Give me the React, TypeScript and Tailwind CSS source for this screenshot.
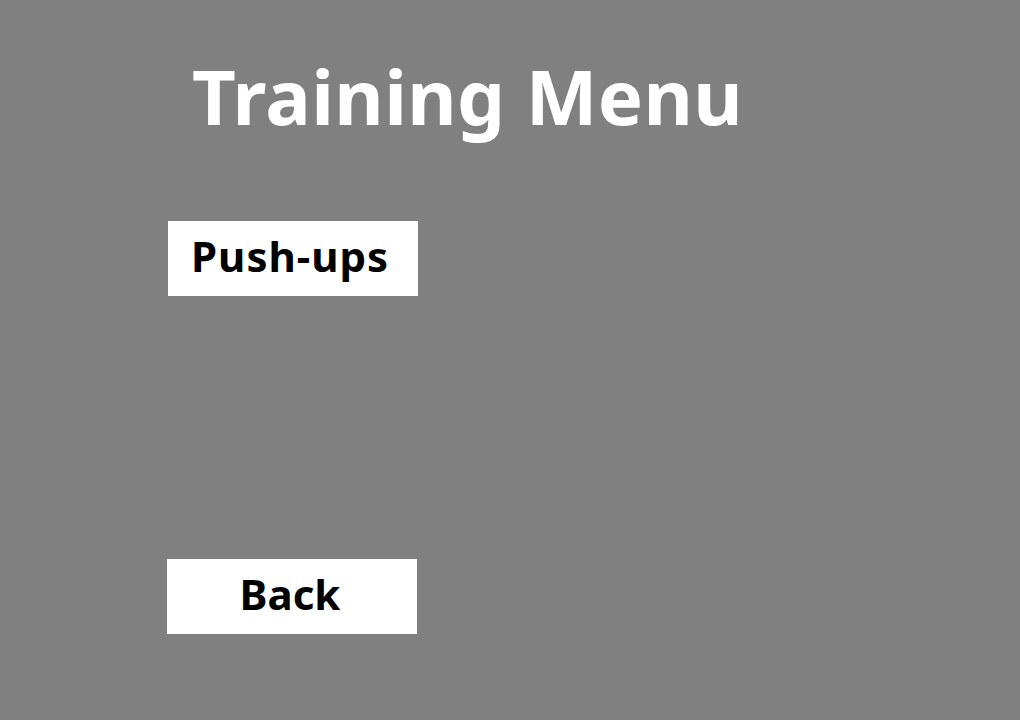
export default function App() {
  return (
    <div
      className="w-[1020px] h-[720px] bg-[#808080] flex flex-col"
      style={{ fontFamily: '"Noto Sans", "Open Sans", sans-serif' }}
    >
      <h1 className="pl-[192px] pt-[58px] text-[76px] leading-[76px] font-bold text-white tracking-[0.4px]">
        Training Menu
      </h1>
      <div className="pl-[168px] pt-[87px] flex flex-col">
        <button className="w-[250px] h-[75px] bg-white text-black text-[42px] font-bold text-left pl-[23px] pt-[14px] leading-[42px] tracking-[1px] flex items-start">
          Push-ups
        </button>
        <button className="mt-[263px] -ml-px w-[250px] h-[75px] bg-white text-black text-[42px] font-bold pt-[14px] leading-[42px] flex items-start justify-center pr-[4px]">
          Back
        </button>
      </div>
    </div>
  );
}
